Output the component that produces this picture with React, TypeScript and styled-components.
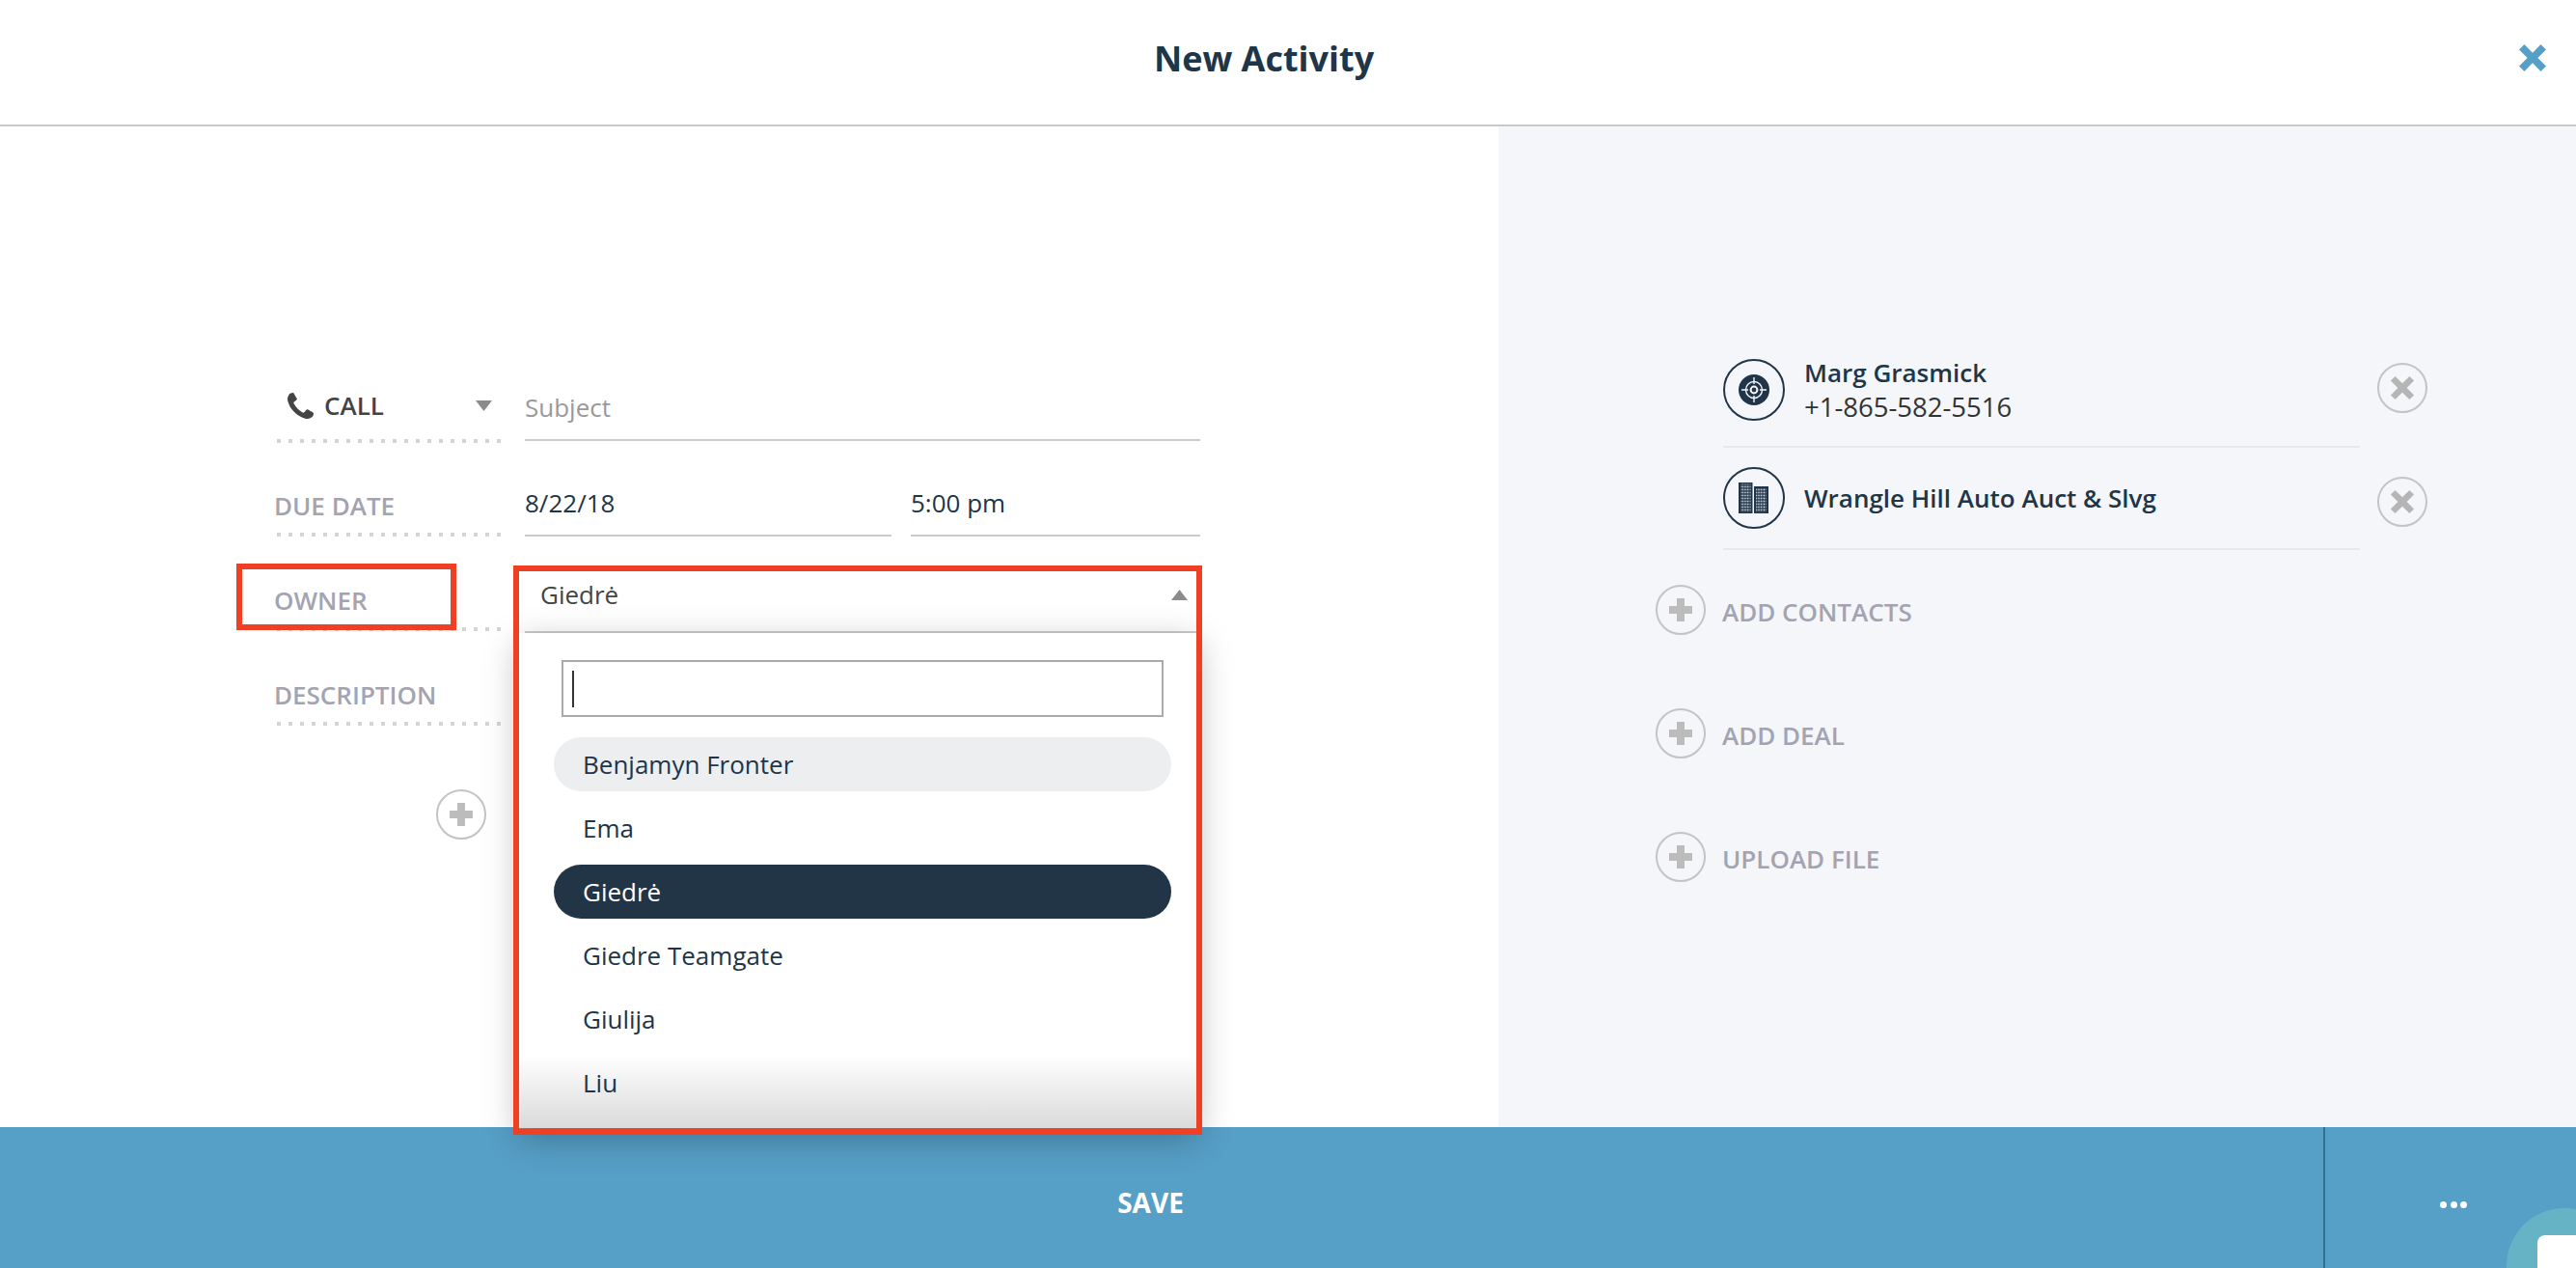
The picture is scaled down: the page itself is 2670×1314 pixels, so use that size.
import React from 'react';
import styled, {createGlobalStyle} from 'styled-components';

const navy = '#203548';
const muted = '#a3a3b1';

const GlobalStyle = createGlobalStyle`
  html, body { margin: 0; padding: 0; background: #fff; }
  body { font-family: "Open Sans", "Noto Sans", sans-serif; color: ${navy}; }
  * { box-sizing: border-box; }
`;

const owners = ['Benjamyn Fronter', 'Ema', 'Giedrė', 'Giedre Teamgate', 'Giulija', 'Liu'];

const CrossIcon: React.FC<{size: number; color: string}> = ({size, color}) => (
  <svg width={size} height={size} viewBox="0 0 28 28">
    <path d="M6 1 L14 9 L22 1 L27 6 L19 14 L27 22 L22 27 L14 19 L6 27 L1 22 L9 14 L1 6 Z" fill={color} />
  </svg>
);

const PlusIcon = () => (
  <svg width="26" height="26" viewBox="0 0 26 26">
    <path d="M9 1 H17 V9 H25 V17 H17 V25 H9 V17 H1 V9 H9 Z" fill="#bcbcbc" />
  </svg>
);

const Caret: React.FC<{up?: boolean}> = ({up}) => (
  <svg width="17" height="11" viewBox="0 0 17 11">
    <path d={up ? 'M8.5 0 L17 11 H0 Z' : 'M0 0 H17 L8.5 11 Z'} fill="#8b8b8b" />
  </svg>
);

const PhoneIcon = () => (
  <svg width="27" height="27" viewBox="0 0 1408 1408">
    <path
      fill="#444"
      d="M1408 1112q0 27-10 70.5t-21 68.5q-21 50-122 106-94 51-186 51-27 0-53-3.5t-57.5-12.5-47-14.5-55.5-20.5-49-18q-98-35-175-83-127-79-264-216t-216-264q-48-77-83-175-3-9-18-49t-20.5-55.5-14.5-47-12.5-57.5-3.5-53q0-92 51-186 56-101 106-122 25-11 68.5-21t70.5-10q14 0 21 3 18 6 53 76 11 19 30 54t35 63.5 31 53.5q3 4 17.5 25t21.5 35.5 7 28.5q0 20-28.5 50t-62 55-62 53-28.5 46q0 9 5 22.5t8.5 20.5 14 24 11.5 19q76 137 174 235t235 174q2 1 19 11.5t24 14 20.5 8.5 22.5 5q18 0 46-28.5t53-62 55-62 50-28.5q14 0 28.5 7t35.5 21.5 25 17.5q25 15 53.5 31t63.5 35 54 30q70 35 76 53 3 7 3 21z"
    />
  </svg>
);

const TargetIcon = () => (
  <svg width="32" height="32" viewBox="0 0 32 32">
    <circle cx="16" cy="16" r="16" fill={navy} />
    <circle cx="16" cy="16" r="8.5" fill="none" stroke="#f4f6fa" strokeWidth="1.4" />
    <circle cx="16" cy="16" r="3.4" fill="none" stroke="#f4f6fa" strokeWidth="2" />
    <path d="M16 3 V10 M16 22 V29 M3 16 H10 M22 16 H29" stroke="#f4f6fa" strokeWidth="1.4" />
  </svg>
);

const BuildingIcon = () => (
  <svg width="32" height="32" viewBox="0 0 32 32">
    <defs>
      <pattern id="win" width="2.8" height="3" patternUnits="userSpaceOnUse">
        <rect width="1.5" height="1.7" x="0.6" y="0.6" fill="#e4e9ef" />
      </pattern>
    </defs>
    <rect x="0" y="0" width="14.5" height="32" fill={navy} />
    <rect x="16" y="4" width="15" height="28" fill={navy} />
    <rect x="2" y="1.5" width="10.5" height="29" fill="url(#win)" />
    <rect x="18" y="6" width="11" height="24.5" fill="url(#win)" />
  </svg>
);

export default function App() {
  return (
    <Page>
      <GlobalStyle />
      <Header>
        <Title>New Activity</Title>
        <CloseButton>
          <CrossIcon size={30} color="#569fc6" />
        </CloseButton>
      </Header>

      <Body>
        <FormPanel>
          <Row>
            <TypeCell>
              <PhoneIcon />
              <TypeName>CALL</TypeName>
              <TypeCaret>
                <Caret />
              </TypeCaret>
            </TypeCell>
            <SubjectField $muted>Subject</SubjectField>
          </Row>
          <Row>
            <FieldLabel>DUE DATE</FieldLabel>
            <SplitFields>
              <Field>8/22/18</Field>
              <Field>5:00 pm</Field>
            </SplitFields>
          </Row>
          <Row>
            <FieldLabel>OWNER</FieldLabel>
            <OwnerSelect>
              <OwnerValue>
                Giedrė
                <Caret up />
              </OwnerValue>
              <Dropdown>
                <FadeOut />
                <SearchBox>
                  <TextCaret />
                </SearchBox>
                <OwnerList>
                  {owners.map((name, i) => (
                    <OwnerOption key={name} $hover={i === 0} $selected={name === 'Giedrė'}>
                      {name}
                    </OwnerOption>
                  ))}
                </OwnerList>
              </Dropdown>
            </OwnerSelect>
          </Row>
          <Row>
            <FieldLabel>DESCRIPTION</FieldLabel>
          </Row>
          <FormAdd>
            <CircleButton>
              <PlusIcon />
            </CircleButton>
          </FormAdd>
        </FormPanel>

        <SidePanel>
          <ContactList>
            <ContactRow>
              <ContactMain>
                <Avatar>
                  <TargetIcon />
                </Avatar>
                <ContactText>
                  <ContactName>Marg Grasmick</ContactName>
                  <ContactPhone>+1-865-582-5516</ContactPhone>
                </ContactText>
              </ContactMain>
              <RemoveButton $top={24}>
                <CrossIcon size={26} color="#b5b5b5" />
              </RemoveButton>
            </ContactRow>
            <ContactRow>
              <ContactMain>
                <Avatar>
                  <BuildingIcon />
                </Avatar>
                <ContactText>
                  <ContactName>Wrangle Hill Auto Auct &amp; Slvg</ContactName>
                </ContactText>
              </ContactMain>
              <RemoveButton $top={30}>
                <CrossIcon size={26} color="#b5b5b5" />
              </RemoveButton>
            </ContactRow>
          </ContactList>
          <Actions>
            {['ADD CONTACTS', 'ADD DEAL', 'UPLOAD FILE'].map((label) => (
              <ActionRow key={label}>
                <CircleButton>
                  <PlusIcon />
                </CircleButton>
                <ActionLabel>{label}</ActionLabel>
              </ActionRow>
            ))}
          </Actions>
        </SidePanel>
      </Body>

      <Footer>
        <SaveButton>SAVE</SaveButton>
        <MoreButton>
          <Dot />
          <Dot />
          <Dot />
        </MoreButton>
        <ChatBubble>
          <ChatSquare />
        </ChatBubble>
      </Footer>

      <MarkLabel />
      <MarkSelect />
    </Page>
  );
}

const Page = styled.div`
  position: relative;
  display: flex;
  flex-direction: column;
  width: 2670px;
  height: 1314px;
  overflow: hidden;
`;

const Header = styled.header`
  position: relative;
  flex: none;
  height: 131px;
  display: flex;
  align-items: center;
  justify-content: center;
  padding: 0 50px 8px 0;
  border-bottom: 2px solid #c9c9c9;
`;

const Title = styled.h1`
  margin: 0;
  font-size: 36px;
  line-height: 48px;
  font-weight: 700;
  color: ${navy};
`;

const CloseButton = styled.div`
  position: absolute;
  left: 2610px;
  top: 45px;
  display: flex;
`;

const Body = styled.main`
  flex: 1;
  display: flex;
  min-height: 0;
`;

const FormPanel = styled.section`
  flex: none;
  width: 1553px;
  padding: 229px 0 0 284px;
`;

const Row = styled.div`
  display: grid;
  grid-template-columns: 238px 700px;
  column-gap: 22px;
  align-items: end;
  height: 98px;
`;

const dots = `
  content: '';
  display: block;
  height: 4px;
  margin-left: 3px;
  background: repeating-linear-gradient(90deg, #d4d4d4 0 4px, transparent 4px 12px);
`;

const FieldLabel = styled.div`
  font-size: 26px;
  line-height: 34px;
  font-weight: 600;
  color: ${muted};

  &::after {
    ${dots}
    margin-top: 11px;
  }
`;

const TypeCell = styled.div`
  display: flex;
  flex-wrap: wrap;
  align-items: center;
  padding-left: 14px;
  margin-bottom: -1px;
  column-gap: 11px;

  &::after {
    ${dots}
    flex: 0 0 calc(100% + 11px);
    margin-left: -11px;
    margin-top: 18px;
  }
`;

const TypeName = styled.span`
  font-size: 26px;
  line-height: 34px;
  font-weight: 600;
  color: #444;
`;

const TypeCaret = styled.span`
  display: flex;
  margin-left: auto;
  margin-right: 12px;
`;

const Field = styled.div<{$muted?: boolean}>`
  flex: 1;
  font-size: 26px;
  line-height: 34px;
  padding-bottom: 16px;
  border-bottom: 2px solid #cbcbcb;
  color: ${(p) => (p.$muted ? '#999' : navy)};
`;

const SubjectField = styled(Field)`
  margin-bottom: 1px;
`;

const SplitFields = styled.div`
  display: grid;
  grid-template-columns: 380px 300px;
  column-gap: 20px;
`;

const OwnerSelect = styled.div`
  position: relative;
  margin-bottom: -2px;
`;

const OwnerValue = styled.div`
  display: flex;
  align-items: center;
  justify-content: space-between;
  padding: 0 13px 21px 16px;
  font-size: 26px;
  line-height: 34px;
  color: #444;
  border-bottom: 2px solid #cbcbcb;
`;

const Dropdown = styled.div`
  position: absolute;
  z-index: 5;
  top: 100%;
  left: -6px;
  width: 703px;
  height: 513px;
  padding: 28px 0 0 36px;
  background: #fff;
  box-shadow: 0 10px 34px rgba(0, 0, 0, 0.28);
  overflow: hidden;
`;

const SearchBox = styled.div`
  position: relative;
  display: flex;
  align-items: center;
  width: 624px;
  height: 59px;
  margin-left: 8px;
  padding-left: 9px;
  border: 2px solid #aaa;
`;

const TextCaret = styled.span`
  width: 2px;
  height: 38px;
  background: #333;
`;

const OwnerList = styled.ul`
  position: relative;
  list-style: none;
  margin: 21px 0 0;
  padding: 0;
  width: 640px;
  display: flex;
  flex-direction: column;
  gap: 10px;
`;

const OwnerOption = styled.li<{$hover?: boolean; $selected?: boolean}>`
  height: 56px;
  padding-left: 30px;
  border-radius: 28px;
  font-size: 26px;
  line-height: 56px;
  background: ${(p) => (p.$selected ? '#213547' : p.$hover ? '#edeef0' : 'transparent')};
  color: ${(p) => (p.$selected ? '#fff' : navy)};
`;

const FadeOut = styled.div`
  position: absolute;
  left: 0;
  right: 0;
  bottom: 0;
  height: 76px;
  background: linear-gradient(rgba(218, 218, 218, 0), rgba(218, 218, 218, 1));
`;

const FormAdd = styled.div`
  margin: 66px 0 0 168px;
`;

const CircleButton = styled.div`
  flex: none;
  width: 52px;
  height: 52px;
  display: flex;
  align-items: center;
  justify-content: center;
  border: 2px solid #c4c4c4;
  border-radius: 50%;
`;

const SidePanel = styled.aside`
  flex: 1;
  padding-top: 221px;
  background: #f4f6fa;
`;

const ContactList = styled.div`
  margin-left: 233px;
`;

const ContactRow = styled.div`
  display: flex;
  align-items: flex-start;
`;

const ContactMain = styled.div`
  display: flex;
  align-items: center;
  width: 660px;
  padding: 16px 0 22px;
  border-bottom: 2px solid #e6e8ee;

  ${ContactRow} + ${ContactRow} & {
    padding: 20px 0;
  }
`;

const Avatar = styled.div`
  flex: none;
  width: 64px;
  height: 64px;
  display: flex;
  align-items: center;
  justify-content: center;
  border: 2px solid ${navy};
  border-radius: 50%;
`;

const ContactText = styled.div`
  margin-left: 20px;
`;

const ContactName = styled.div`
  font-size: 26px;
  line-height: 36px;
  font-weight: 600;
  color: ${navy};
`;

const ContactPhone = styled.div`
  font-size: 27.5px;
  line-height: 36px;
  color: #333;
`;

const RemoveButton = styled(CircleButton)<{$top: number}>`
  margin: ${(p) => p.$top}px 0 0 18px;
`;

const Actions = styled.div`
  display: flex;
  flex-direction: column;
  gap: 76px;
  margin: 36px 0 0 163px;
`;

const ActionRow = styled.div`
  display: flex;
  align-items: center;
  gap: 17px;
`;

const ActionLabel = styled.span`
  margin-top: 4px;
  font-size: 26px;
  line-height: 34px;
  font-weight: 600;
  color: ${muted};
`;

const Footer = styled.footer`
  position: relative;
  flex: none;
  display: flex;
  height: 146px;
  background: #569fc6;
`;

const SaveButton = styled.div`
  width: 2410px;
  padding: 10px 23px 0 0;
  display: flex;
  align-items: center;
  justify-content: center;
  font-size: 28px;
  font-weight: 700;
  color: #fff;
  border-right: 2px solid #2f7390;
`;

const MoreButton = styled.div`
  flex: 1;
  display: flex;
  align-items: center;
  justify-content: center;
  gap: 3.5px;
  padding: 14px 0 0 6px;
`;

const Dot = styled.span`
  width: 7px;
  height: 7px;
  border-radius: 50%;
  background: #fff;
`;

const ChatBubble = styled.div`
  position: absolute;
  left: 2598px;
  top: 84px;
  width: 120px;
  height: 120px;
  border-radius: 50%;
  background: #67b3c6;
`;

const ChatSquare = styled.div`
  position: absolute;
  left: 32px;
  top: 28px;
  width: 70px;
  height: 70px;
  border-radius: 8px;
  background: #fff;
`;

const MarkLabel = styled.div`
  position: absolute;
  z-index: 10;
  left: 245px;
  top: 584px;
  width: 228px;
  height: 69px;
  border: 6px solid #ef4023;
`;

const MarkSelect = styled.div`
  position: absolute;
  z-index: 10;
  left: 532px;
  top: 586px;
  width: 714px;
  height: 590px;
  border: 6px solid #ef4023;
`;
